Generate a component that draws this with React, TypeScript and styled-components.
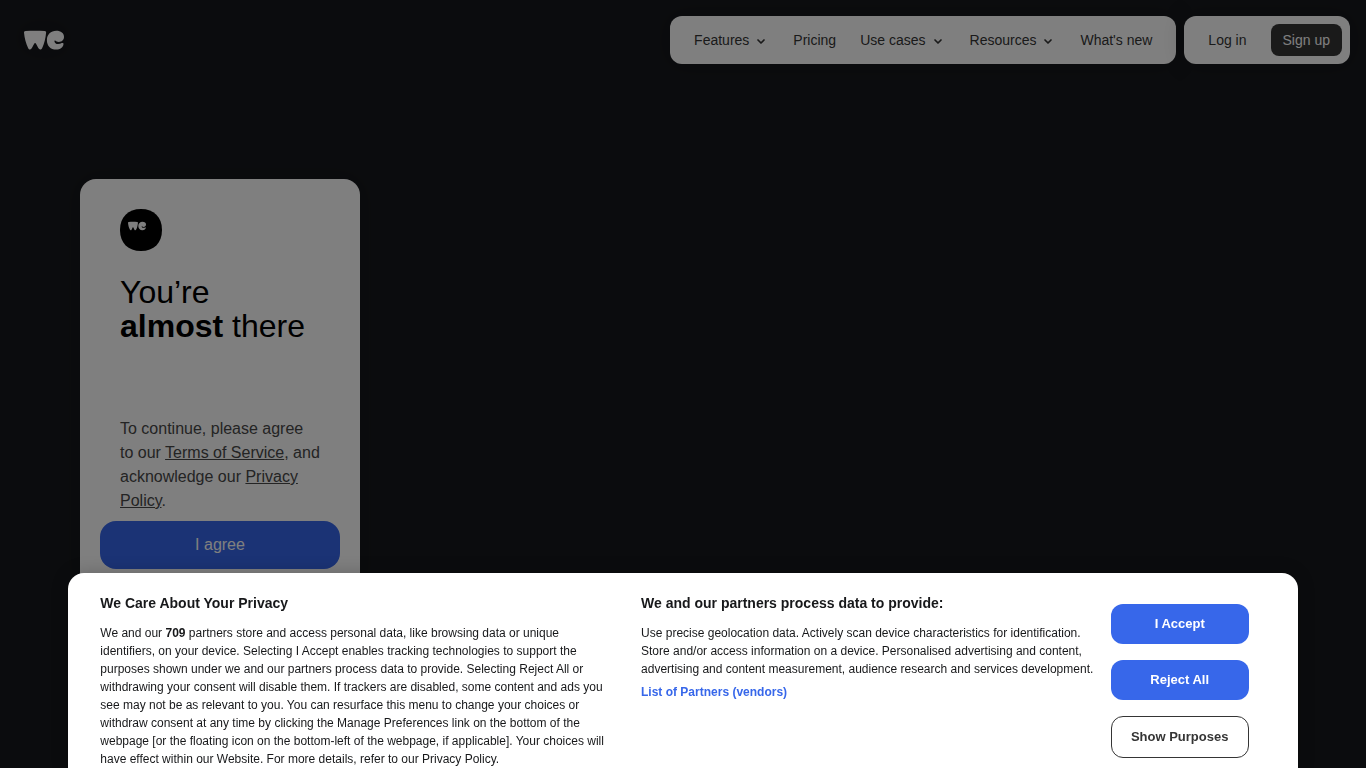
import React from "react";
import styled, { createGlobalStyle, css } from "styled-components";

const GlobalStyle = createGlobalStyle`
  *, *::before, *::after { box-sizing: border-box; }
  html, body { margin: 0; background: #17191d; }
  body, button { font-family: "Liberation Sans", Arial, sans-serif; }
  h1, h2, p { margin: 0; }
  button { border: 0; padding: 0; cursor: pointer; }
`;

const Page = styled.div`
  display: flex;
  flex-direction: column;
  min-height: 100vh;
  position: relative;
`;

const Header = styled.header`
  position: absolute;
  top: 0;
  left: 0;
  right: 0;
  display: flex;
  align-items: center;
  gap: 8px;
  padding: 16px;
`;

const LogoLink = styled.a`
  display: flex;
  margin-right: auto;
  padding: 0 8px;
  color: #fff;
  filter: drop-shadow(0 0 12px rgba(0, 0, 0, 0.3));
`;

const Bar = styled.nav<{ $end?: number }>`
  display: flex;
  align-items: center;
  gap: 24px;
  height: 48px;
  padding: 0 ${(p) => p.$end ?? 24}px 0 24px;
  border-radius: 12px;
  background: #fff;
  box-shadow: 0 0 24px rgba(0, 0, 0, 0.2);
`;

const navText = css`
  font-size: 14px;
  line-height: 16px;
  color: #353535;
  white-space: nowrap;
`;

const NavLink = styled.a`
  ${navText}
  text-decoration: none;
`;

const NavButton = styled.button`
  ${navText}
  display: flex;
  align-items: center;
  gap: 4px;
  background: none;
`;

const SignUp = styled.a`
  ${navText}
  padding: 8px 12px;
  border-radius: 8px;
  background: #353535;
  color: #fff;
  text-decoration: none;
`;

const Main = styled.main`
  flex: 1;
  display: flex;
  align-items: center;
  padding: 80px;
`;

const Card = styled.section`
  display: flex;
  flex-direction: column;
  width: 280px;
  min-height: 410px;
  padding: 30px 20px 20px;
  border-radius: 16px;
  background: #fff;
  box-shadow: 0 0 24px rgba(0, 0, 0, 0.2);
`;

const Badge = styled.svg`
  display: block;
  margin: 0 20px;
`;

const Title = styled.h1`
  margin: 24px 20px 0;
  font-size: 32px;
  line-height: 34px;
  font-weight: 400;
  color: #000;
`;

const Terms = styled.p`
  margin: auto 20px 8px;
  font-size: 16px;
  line-height: 24px;
  color: #484848;

  a { color: inherit; }
`;

const AgreeButton = styled.button`
  height: 48px;
  border-radius: 16px;
  background: #3767ea;
  color: #fff;
  font-size: 16px;
`;

const Backdrop = styled.div`
  position: fixed;
  inset: 0;
  background: rgba(0, 0, 0, 0.5);
`;

const Banner = styled.section`
  position: fixed;
  bottom: 0;
  left: 5%;
  width: 90%;
  display: grid;
  grid-template-columns: minmax(0, 524fr) minmax(0, 453fr) 138px;
  column-gap: 16px;
  padding: 21px 49px 0 32px;
  border-radius: 16px 16px 0 0;
  background: #fff;
  color: #17181a;
  box-shadow: 0 0 18px rgba(0, 0, 0, 0.2);
`;

const BannerText = styled.div<{ $inset?: boolean }>`
  padding-right: ${(p) => (p.$inset ? 16 : 0)}px;
`;

const BannerTitle = styled.h2`
  margin-bottom: 12px;
  font-size: 14px;
  line-height: 18px;
`;

const BannerCopy = styled.p`
  font-size: 12px;
  line-height: 18px;
`;

const PartnersButton = styled.button`
  display: block;
  margin-top: 5px;
  background: none;
  color: #3767ea;
  font-size: 12px;
  line-height: 18px;
  font-weight: 700;
`;

const Actions = styled.div`
  display: flex;
  flex-direction: column;
  gap: 16px;
  padding-top: 10px;
`;

const Action = styled.button<{ $outline?: boolean }>`
  height: ${(p) => (p.$outline ? 42 : 40)}px;
  padding-bottom: 2px;
  border: ${(p) => (p.$outline ? "1px solid #353535" : "0")};
  border-radius: 12px;
  background: ${(p) => (p.$outline ? "#fff" : "#3767ea")};
  color: ${(p) => (p.$outline ? "#353535" : "#fff")};
  font-size: 13px;
  font-weight: 700;
`;

const LogoShape = () => (
  <>
    <path d="M0 2.600C0 1.600.5 1.200 1.600 1.100 8 .5 14 .5 20.600 1.100c1.200.1 1.600.5 1.500 1.500-.5 5.700-1.800 11.200-3.900 15.300-1 2-2.900 2-3.900.2L11.900 13.600c-.500-.9-1.100-.9-1.600 0L7.900 18.100c-1 1.800-2.800 1.800-3.800-.2C2 13.600.5 8.200 0 2.600Z" />
    <path d="M32.300.8c4.600 0 7.700 2.400 7.700 6 0 3.200-2.200 5.200-5.200 5.200-1.600 0-2.800-.5-3.600-1.400-.3-.4-.8-.2-.8.3.1 1.900 1.500 3.100 3.700 3.100 1.400 0 2.500-.3 3.700-.9 1-.5 1.800-.1 1.700.9-.3 3.300-3.200 5.600-7.400 5.600-5.500 0-9.200-3.700-9.200-9.400C22.900 4.500 26.800.8 32.300.8Z" />
  </>
);

const Chevron = () => (
  <svg width="16" height="16" viewBox="0 0 16 16" fill="none" aria-hidden="true">
    <path d="M5 8l3 3 3-3" stroke="currentColor" strokeWidth="1.700" strokeLinecap="round" strokeLinejoin="round" />
  </svg>
);

export default function App() {
  return (
    <>
      <GlobalStyle />
      <Page>
        <Header>
          <LogoLink href="#" aria-label="Home">
            <svg width="40" height="20" viewBox="0 0 40 20" fill="currentColor" aria-hidden="true">
              <LogoShape />
            </svg>
          </LogoLink>
          <Bar aria-label="Main">
            <NavButton>Features<Chevron /></NavButton>
            <NavLink href="#">Pricing</NavLink>
            <NavButton>Use cases<Chevron /></NavButton>
            <NavButton>Resources<Chevron /></NavButton>
            <NavLink href="#">What's new</NavLink>
          </Bar>
          <Bar aria-label="Account" $end={8}>
            <NavLink href="#">Log in</NavLink>
            <SignUp href="#">Sign up</SignUp>
          </Bar>
        </Header>
        <Main>
          <Card>
            <Badge width="42" height="42" viewBox="0 0 42 42" aria-hidden="true">
              <path d="M21 0C34 0 42 8 42 21S34 42 21 42 0 34 0 21 8 0 21 0Z" fill="#000" />
              <g transform="translate(8 12.500) scale(.45)" fill="#fff">
                <LogoShape />
              </g>
            </Badge>
            <Title>You’re<br /><strong>almost</strong> there</Title>
            <Terms>
              To continue, please agree to our <a href="#">Terms of Service</a>, and
              acknowledge our <a href="#">Privacy Policy</a>.
            </Terms>
            <AgreeButton>I agree</AgreeButton>
          </Card>
        </Main>
      </Page>
      <Backdrop />
      <Banner role="dialog" aria-label="Privacy">
        <BannerText $inset>
          <BannerTitle>We Care About Your Privacy</BannerTitle>
          <BannerCopy>
            We and our <b>709</b> partners store and access personal data, like browsing data or
            unique identifiers, on your device. Selecting I Accept enables tracking technologies to
            support the purposes shown under we and our partners process data to provide. Selecting
            Reject All or withdrawing your consent will disable them. If trackers are disabled, some
            content and ads you see may not be as relevant to you. You can resurface this menu to
            change your choices or withdraw consent at any time by clicking the Manage Preferences
            link on the bottom of the webpage [or the floating icon on the bottom-left of the
            webpage, if applicable]. Your choices will have effect within our Website. For more
            details, refer to our Privacy Policy.
          </BannerCopy>
        </BannerText>
        <BannerText>
          <BannerTitle>We and our partners process data to provide:</BannerTitle>
          <BannerCopy>
            Use precise geolocation data. Actively scan device characteristics for identification.
            Store and/or access information on a device. Personalised advertising and content,
            advertising and content measurement, audience research and services development.
          </BannerCopy>
          <PartnersButton>List of Partners (vendors)</PartnersButton>
        </BannerText>
        <Actions>
          <Action>I Accept</Action>
          <Action>Reject All</Action>
          <Action $outline>Show Purposes</Action>
        </Actions>
      </Banner>
    </>
  );
}
